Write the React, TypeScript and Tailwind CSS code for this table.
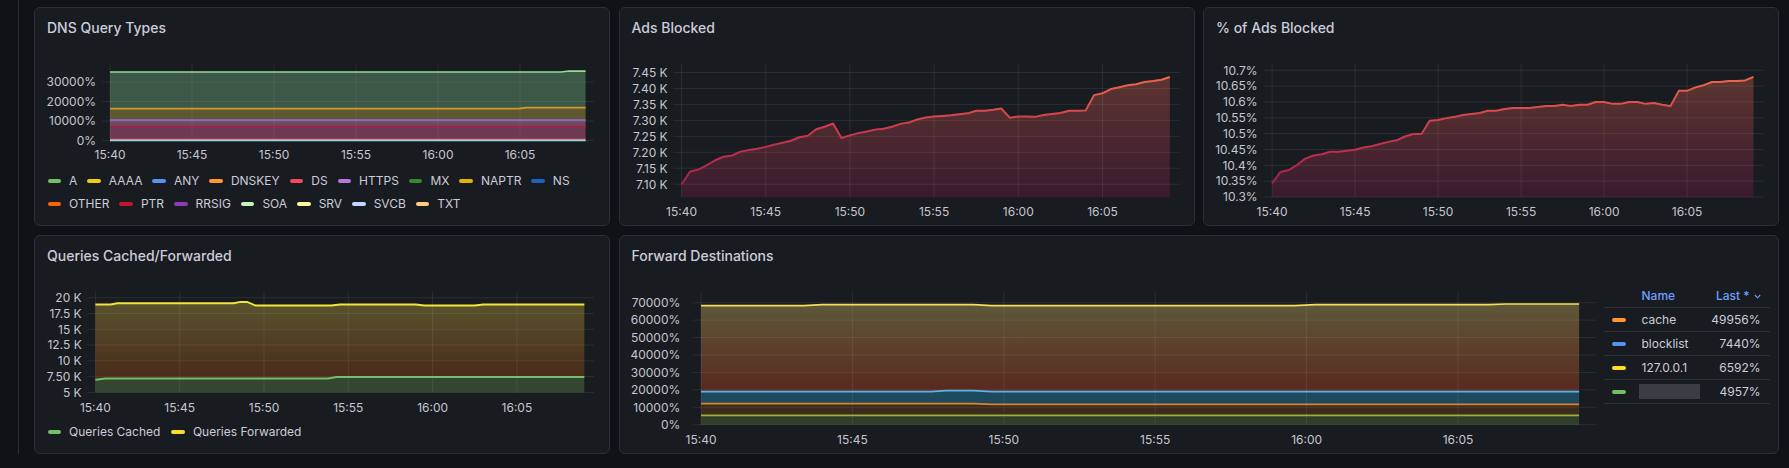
import React from "react";

type Pt = [number, number];

interface Frame {
  x0: number;
  pxMin: number;
  top: number;
  bottom: number;
  right: number;
  y: (v: number) => number;
}

const TIMES = ["15:40", "15:45", "15:50", "15:55", "16:00", "16:05"];

const f2 = (n: number) => n.toFixed(2);
const pathOf = (pts: Pt[]) => pts.map(([x, y], i) => `${i ? "L" : "M"}${f2(x)},${f2(y)}`).join("");
const bandOf = (top: Pt[], bottom: Pt[]) =>
  pathOf(top) + [...bottom].reverse().map(([x, y]) => `L${f2(x)},${f2(y)}`).join("") + "Z";

// data as [minutes since 15:40, value]
const toPts = (f: Frame, data: [number, number][]): Pt[] => data.map(([t, v]) => [f.x0 + t * f.pxMin, f.y(v)]);
// samples every 30s
const evenly = (f: Frame, values: number[]): Pt[] => values.map((v, i) => [f.x0 + i * 0.5 * f.pxMin, f.y(v)]);
const floorOf = (f: Frame, pts: Pt[]): Pt[] => [
  [pts[0][0], f.bottom],
  [pts[pts.length - 1][0], f.bottom],
];

function Axes({ f, yTicks, labelRight, xLabelY }: { f: Frame; yTicks: [number, string][]; labelRight: number; xLabelY: number }) {
  return (
    <g>
      {yTicks.map(([v]) => (
        <line key={`h${v}`} x1={f.x0 - 8} x2={f.right} y1={f.y(v)} y2={f.y(v)} stroke="#ccccdc" strokeOpacity={0.1} />
      ))}
      {TIMES.map((t, i) => {
        const x = f.x0 + i * 5 * f.pxMin;
        return <line key={`v${t}`} x1={x} x2={x} y1={f.top} y2={f.bottom} stroke="#ccccdc" strokeOpacity={0.1} />;
      })}
      {yTicks.map(([v, label]) => (
        <text key={`l${v}`} x={labelRight} y={f.y(v) + 4.3} textAnchor="end" fontSize={12} fill="#c6c6d0">
          {label}
        </text>
      ))}
      {TIMES.map((t, i) => (
        <text key={`t${t}`} x={f.x0 + i * 5 * f.pxMin} y={xLabelY + 4.3} textAnchor="middle" fontSize={12} fill="#c6c6d0">
          {t}
        </text>
      ))}
    </g>
  );
}

function Panel({ title, className, children }: { title: string; className: string; children?: React.ReactNode }) {
  return (
    <div className={`flex shrink-0 flex-col overflow-hidden rounded-[6px] border border-[#2c2f35] bg-[#181b1f] ${className}`}>
      <div className="h-[30px] shrink-0 pl-[12px] pt-[10px] text-[14px] leading-[20px] font-medium text-[#ccccdc]">{title}</div>
      {children}
    </div>
  );
}

function LegendItem({ label, swatch }: { label: string; swatch: string }) {
  return (
    <div className="flex items-center gap-[8px]">
      <span className={`h-[4px] w-[13.5px] rounded-full ${swatch}`} />
      <span>{label}</span>
    </div>
  );
}

/* ---------- DNS Query Types ---------- */

const f1: Frame = { x0: 76, pxMin: 16.4, top: 57, bottom: 133.7, right: 560, y: (v) => 133.7 - (v / 10000) * 19.57 };

const queryLayers: { color: string; fill: string; data: [number, number][] }[] = [
  { color: "#96dc8e", fill: "#3c5846", data: [[0, 35100], [27.5, 35100], [28, 35600], [29, 35600]] },
  { color: "#d4982a", fill: "#5c5832", data: [[0, 16350], [24.9, 16350], [25.4, 16860], [29, 16860]] },
  { color: "#9b6be0", fill: "#6e4b5f", data: [[0, 10580], [29, 10580]] },
  { color: "#a3224a", fill: "#6e3a52", data: [[0, 7150], [29, 7150]] },
  { color: "#f0584c", fill: "#7a3a40", data: [[0, 610], [29, 610]] },
  { color: "#9ad6e8", fill: "#3a4a50", data: [[0, 150], [29, 150]] },
];

const queryLegend: [string, string][][] = [
  [
    ["A", "bg-[#73bf69]"],
    ["AAAA", "bg-[#f2cc0c]"],
    ["ANY", "bg-[#5794f2]"],
    ["DNSKEY", "bg-[#ff9830]"],
    ["DS", "bg-[#f2495c]"],
    ["HTTPS", "bg-[#b877d9]"],
    ["MX", "bg-[#37872d]"],
    ["NAPTR", "bg-[#e0b400]"],
    ["NS", "bg-[#1f60c4]"],
  ],
  [
    ["OTHER", "bg-[#fa6400]"],
    ["PTR", "bg-[#c4162a]"],
    ["RRSIG", "bg-[#8f3bb8]"],
    ["SOA", "bg-[#c8f2c2]"],
    ["SRV", "bg-[#fff899]"],
    ["SVCB", "bg-[#c0d8ff]"],
    ["TXT", "bg-[#ffcb7d]"],
  ],
];

function QueryTypesChart() {
  const lines = queryLayers.map((l) => toPts(f1, l.data));
  return (
    <svg width={574} height={131} className="block shrink-0">
      <g transform="translate(-1 -31)">
        {queryLayers.map((l, i) => (
          <path key={i} d={bandOf(lines[i], i + 1 < lines.length ? lines[i + 1] : floorOf(f1, lines[i]))} fill={l.fill} />
        ))}
        <Axes
          f={f1}
          yTicks={[[0, "0%"], [10000, "10000%"], [20000, "20000%"], [30000, "30000%"]]}
          labelRight={62}
          xLabelY={148}
        />
        {queryLayers.map((l, i) => (
          <path key={i} d={pathOf(lines[i])} fill="none" stroke={l.color} strokeWidth={1.7} />
        ))}
      </g>
    </svg>
  );
}

/* ---------- Ads Blocked ---------- */

const f2Frame: Frame = { x0: 62.5, pxMin: 16.84, top: 57, bottom: 190.3, right: 561, y: (v) => 177.2 - ((v - 7.1) / 0.05) * 15.96 };

const adsBlocked = [
  7.099, 7.139, 7.146, 7.16, 7.175, 7.186, 7.19, 7.202, 7.207, 7.211, 7.217, 7.224, 7.23, 7.236, 7.247, 7.252, 7.272, 7.28,
  7.29, 7.245, 7.253, 7.26, 7.265, 7.271, 7.274, 7.28, 7.289, 7.293, 7.303, 7.309, 7.312, 7.314, 7.316, 7.319, 7.322, 7.33,
  7.33, 7.333, 7.337, 7.308, 7.312, 7.312, 7.311, 7.317, 7.32, 7.323, 7.33, 7.33, 7.331, 7.379, 7.385, 7.398, 7.404, 7.41,
  7.413, 7.42, 7.423, 7.427, 7.436,
];

const f3: Frame = { x0: 69.1, pxMin: 16.6, top: 57, bottom: 190, right: 560, y: (v) => 190 - ((v - 10.3) / 0.05) * 15.84 };

const pctBlocked = [
  10.343, 10.379, 10.385, 10.401, 10.421, 10.431, 10.435, 10.443, 10.443, 10.446, 10.449, 10.456, 10.46, 10.467, 10.474,
  10.479, 10.491, 10.499, 10.499, 10.541, 10.543, 10.549, 10.553, 10.559, 10.562, 10.565, 10.572, 10.572, 10.578, 10.581,
  10.581, 10.581, 10.584, 10.587, 10.587, 10.591, 10.587, 10.591, 10.591, 10.6, 10.6, 10.594, 10.594, 10.6, 10.6, 10.594,
  10.597, 10.591, 10.587, 10.635, 10.635, 10.646, 10.653, 10.663, 10.663, 10.666, 10.666, 10.668, 10.679,
];

function GradientLineChart({ id, f, values, yTicks, labelRight }: { id: string; f: Frame; values: number[]; yTicks: [number, string][]; labelRight: number }) {
  const pts = evenly(f, values);
  return (
    <svg width={574} height={187} className="block shrink-0">
      <defs>
        <linearGradient id={`${id}-fill`} gradientUnits="userSpaceOnUse" x1={0} y1={f.top + 6} x2={0} y2={f.bottom}>
          <stop offset="0" stopColor="#5e3730" />
          <stop offset="1" stopColor="#3a1a2f" />
        </linearGradient>
        <linearGradient id={`${id}-line`} gradientUnits="userSpaceOnUse" x1={0} y1={f.bottom - 12} x2={0} y2={f.top + 8}>
          <stop offset="0" stopColor="#a41f50" />
          <stop offset="0.5" stopColor="#cf3a4c" />
          <stop offset="1" stopColor="#f06c4b" />
        </linearGradient>
      </defs>
      <g transform="translate(-1 -31)">
        <path d={bandOf(pts, floorOf(f, pts))} fill={`url(#${id}-fill)`} />
        <Axes f={f} yTicks={yTicks} labelRight={labelRight} xLabelY={204.7} />
        <path d={pathOf(pts)} fill="none" stroke={`url(#${id}-line)`} strokeWidth={2} strokeLinejoin="round" />
      </g>
    </svg>
  );
}

/* ---------- Queries Cached/Forwarded ---------- */

const f4: Frame = { x0: 61.4, pxMin: 16.86, top: 57, bottom: 157.4, right: 560, y: (v) => 157.4 - ((v - 5) / 2.5) * 15.78 };

const forwarded: [number, number][] = [
  [0, 18.94], [0.9, 18.94], [1.3, 19.14], [8.2, 19.14], [8.6, 19.34], [9.0, 19.34], [9.5, 18.76], [14.0, 18.76],
  [14.5, 18.94], [19.0, 18.94], [19.5, 18.76], [22.5, 18.76], [23.0, 18.94], [29, 18.94],
];
const cached: [number, number][] = [[0, 7.0], [0.6, 7.22], [13.8, 7.22], [14.3, 7.43], [29, 7.43]];

function CachedChart() {
  const fw = toPts(f4, forwarded);
  const ca = toPts(f4, cached);
  return (
    <svg width={574} height={154} className="block shrink-0">
      <defs>
        <linearGradient id="fw-fill" gradientUnits="userSpaceOnUse" x1={0} y1={62} x2={0} y2={140}>
          <stop offset="0" stopColor="#5a562e" />
          <stop offset="1" stopColor="#4a2c1b" />
        </linearGradient>
      </defs>
      <g transform="translate(-1 -31)">
        <path d={bandOf(fw, ca)} fill="url(#fw-fill)" />
        <path d={bandOf(ca, floorOf(f4, ca))} fill="#34462f" />
        <Axes
          f={f4}
          yTicks={[[5, "5 K"], [7.5, "7.50 K"], [10, "10 K"], [12.5, "12.5 K"], [15, "15 K"], [17.5, "17.5 K"], [20, "20 K"]]}
          labelRight={47.7}
          xLabelY={172.4}
        />
        <path d={pathOf(fw)} fill="none" stroke="#f0e63c" strokeWidth={2} />
        <path d={pathOf(ca)} fill="none" stroke="#73bf69" strokeWidth={2} />
      </g>
    </svg>
  );
}

/* ---------- Forward Destinations ---------- */

const f5: Frame = { x0: 82, pxMin: 30.28, top: 57, bottom: 189.7, right: 977, y: (v) => 189.7 - (v / 10000) * 17.43 };

const destLayers: { color: string; data: [number, number][] }[] = [
  {
    color: "#f5df58",
    data: [[0, 68270], [3.4, 68270], [4, 68850], [9, 68850], [9.6, 68270], [19.6, 68270], [20.3, 68850], [26, 68850], [26.6, 69250], [29, 69250]],
  },
  { color: "#5ab4e5", data: [[0, 18930], [7.6, 18930], [8.1, 19500], [9.0, 19500], [9.6, 18930], [29, 18930]] },
  { color: "#dc8428", data: [[0, 12050], [9.0, 12050], [9.6, 11650], [29, 11650]] },
  { color: "#9aae42", data: [[0, 5340], [29, 5340]] },
];

const destFills = ["url(#dest-top)", "#1e4a5f", "#3d2b1e", "#2f3f2a"];

const destLegend: { name: string; swatch: string; value: string; hidden?: boolean }[] = [
  { name: "cache", swatch: "bg-[#ff9830]", value: "49956%" },
  { name: "blocklist", swatch: "bg-[#5794f2]", value: "7440%" },
  { name: "127.0.0.1", swatch: "bg-[#fade2a]", value: "6592%" },
  { name: "", swatch: "bg-[#73bf69]", value: "4957%", hidden: true },
];

function DestinationsChart() {
  const lines = destLayers.map((l) => toPts(f5, l.data));
  return (
    <svg width={984} height={187} className="block shrink-0">
      <defs>
        <linearGradient id="dest-top" gradientUnits="userSpaceOnUse" x1={0} y1={72} x2={0} y2={156}>
          <stop offset="0" stopColor="#5e5638" />
          <stop offset="1" stopColor="#59291f" />
        </linearGradient>
      </defs>
      <g transform="translate(-1 -31)">
        {lines.map((pts, i) => (
          <path key={i} d={bandOf(pts, i + 1 < lines.length ? lines[i + 1] : floorOf(f5, pts))} fill={destFills[i]} />
        ))}
        <Axes
          f={f5}
          yTicks={[0, 10000, 20000, 30000, 40000, 50000, 60000, 70000].map((v) => [v, `${v}%`] as [number, string])}
          labelRight={61.3}
          xLabelY={204.7}
        />
        {lines.map((pts, i) => (
          <path key={i} d={pathOf(pts)} fill="none" stroke={destLayers[i].color} strokeWidth={1.7} />
        ))}
      </g>
    </svg>
  );
}

function DestinationsTable() {
  return (
    <div className="mt-[18px] w-[166px] shrink-0 text-[12px] text-[#ccccdc]">
      <div className="flex h-[24px] items-center border-b border-[#2c2f35] font-medium text-[#6e9fff]">
        <span className="ml-[38px]">Name</span>
        <span className="ml-auto mr-[9px] flex items-center gap-[4px]">
          Last *
          <svg width={7} height={5} viewBox="0 0 7 5" className="mt-[2px]">
            <path d="M0.8 1 L3.5 3.8 L6.2 1" fill="none" stroke="#6e9fff" strokeWidth={1.1} />
          </svg>
        </span>
      </div>
      {destLegend.map((row) => (
        <div key={row.value} className="flex h-[24px] items-center border-b border-[#2c2f35]">
          <span className={`ml-[8.5px] h-[4px] w-[14px] rounded-full ${row.swatch}`} />
          {row.hidden ? (
            <span className="ml-[12.5px] h-[15px] w-[61px] bg-[#3a3d44] blur-[0.6px]" />
          ) : (
            <span className="ml-[15.5px]">{row.name}</span>
          )}
          <span className="ml-auto mr-[9px]">{row.value}</span>
        </div>
      ))}
    </div>
  );
}

export default function App() {
  return (
    <div className="flex h-[468px] w-[1789px] overflow-hidden bg-[#111217] font-[family-name:Inter,sans-serif]">
      <div className="h-[454px] w-[19px] shrink-0 border-r border-[#2a2c31]" />
      <div className="ml-[15px] flex flex-col gap-[9px] pt-[7px]">
        <div className="flex gap-[8.5px]">
          <Panel title="DNS Query Types" className="h-[219px] w-[576px]">
            <QueryTypesChart />
            <div className="flex flex-col pl-[12.5px] text-[12px] text-[#ccccdc]">
              {queryLegend.map((row, i) => (
                <div key={i} className="flex h-[23px] items-center gap-x-[10px]">
                  {row.map(([label, swatch]) => (
                    <LegendItem key={label} label={label} swatch={swatch} />
                  ))}
                </div>
              ))}
            </div>
          </Panel>
          <Panel title="Ads Blocked" className="h-[219px] w-[576px]">
            <GradientLineChart
              id="ads"
              f={f2Frame}
              values={adsBlocked}
              yTicks={[7.1, 7.15, 7.2, 7.25, 7.3, 7.35, 7.4, 7.45].map((v) => [v, `${v.toFixed(2)} K`] as [number, string])}
              labelRight={48.7}
            />
          </Panel>
          <Panel title="% of Ads Blocked" className="h-[219px] w-[576px]">
            <GradientLineChart
              id="pct"
              f={f3}
              values={pctBlocked}
              yTicks={[
                [10.3, "10.3%"],
                [10.35, "10.35%"],
                [10.4, "10.4%"],
                [10.45, "10.45%"],
                [10.5, "10.5%"],
                [10.55, "10.55%"],
                [10.6, "10.6%"],
                [10.65, "10.65%"],
                [10.7, "10.7%"],
              ]}
              labelRight={54.6}
            />
          </Panel>
        </div>
        <div className="flex gap-[8.5px]">
          <Panel title="Queries Cached/Forwarded" className="h-[219px] w-[576px]">
            <CachedChart />
            <div className="flex h-[24px] items-center gap-x-[11px] pl-[12.5px] text-[12px] text-[#ccccdc]">
              <LegendItem label="Queries Cached" swatch="bg-[#73bf69]" />
              <LegendItem label="Queries Forwarded" swatch="bg-[#fade2a]" />
            </div>
          </Panel>
          <Panel title="Forward Destinations" className="h-[219px] w-[1160.5px]">
            <div className="flex">
              <DestinationsChart />
              <DestinationsTable />
            </div>
          </Panel>
        </div>
      </div>
    </div>
  );
}
